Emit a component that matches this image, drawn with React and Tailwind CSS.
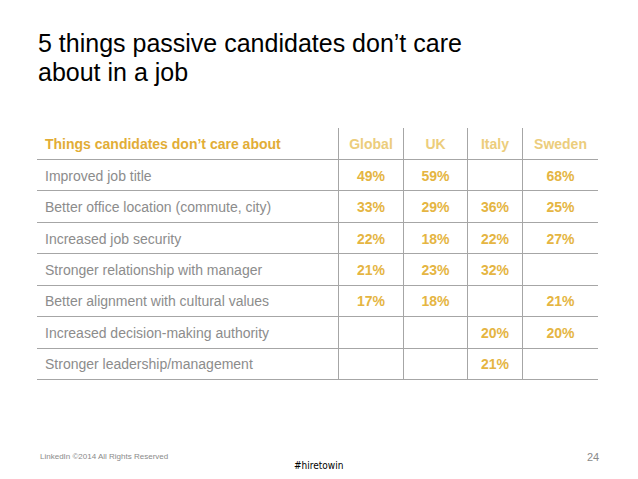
export default function App() {
  const rows = [
    ["Improved job title", "49%", "59%", "", "68%"],
    ["Better office location (commute, city)", "33%", "29%", "36%", "25%"],
    ["Increased job security", "22%", "18%", "22%", "27%"],
    ["Stronger relationship with manager", "21%", "23%", "32%", ""],
    ["Better alignment with cultural values", "17%", "18%", "", "21%"],
    ["Increased decision-making authority", "", "", "20%", "20%"],
    ["Stronger leadership/management", "", "", "21%", ""],
  ];
  const widths = ["w-[301px]", "w-[65px]", "w-[64px]", "w-[55px]", "w-[76px]"];
  const heads = ["Global", "UK", "Italy", "Sweden"];
  return (
    <div className="w-[638px] h-[479px] bg-white relative overflow-hidden" style={{ fontFamily: '"Liberation Sans", Arial, sans-serif' }}>
      <div className="pt-[29px] pl-[38px] text-[25px] leading-[29px] text-black">
        5 things passive candidates don’t care<br />about in a job
      </div>
      <div className="ml-[37px] mt-[41px] w-[561px]">
        <div className="flex h-[32px] border-b border-[#a6a6a6]">
          <div className={`${widths[0]} flex items-center pl-[8px] pt-[1px] text-[14px] font-bold text-[#e2ad36]`}>
            Things candidates don’t care about
          </div>
          {heads.map((h, i) => (
            <div key={h} className={`${widths[i + 1]} flex items-center justify-center pt-[1px] text-[14px] font-bold text-[#eccd7c] border-l border-[#a6a6a6]`}>
              {h}
            </div>
          ))}
        </div>
        {rows.map((r, ri) => (
          <div key={ri} className="flex h-[31.43px] border-b border-[#a6a6a6]">
            <div className={`${widths[0]} flex items-center pl-[8px] pt-[2px] text-[14px] text-[#8c8c8c]`}>
              {r[0]}
            </div>
            {r.slice(1).map((v, i) => (
              <div key={i} className={`${widths[i + 1]} flex items-center justify-center pt-[2px] text-[14px] font-bold text-[#e5b542] border-l border-[#a6a6a6]`}>
                {v}
              </div>
            ))}
          </div>
        ))}
      </div>
      <div className="absolute left-[40px] top-[451px] text-[8px] text-[#8a8a8a]">LinkedIn ©2014 All Rights Reserved</div>
      <div className="absolute left-[294px] top-[458px] text-[10px] text-black" style={{ fontFamily: '"DejaVu Sans Condensed", "Liberation Sans Narrow", sans-serif' }}>#hiretowin</div>
      <div className="absolute left-[587px] top-[449px] text-[11px] text-[#8a8a8a]">24</div>
    </div>
  );
}
